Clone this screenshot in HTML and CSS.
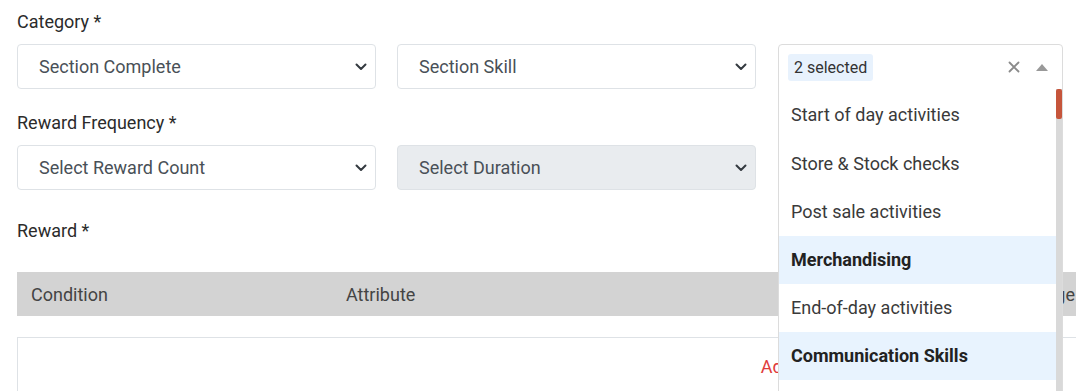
FILE: index.html
```html
<!DOCTYPE html>
<html lang="en">
<head>
    <meta charset="UTF-8">
    <meta name="viewport" content="width=device-width, initial-scale=1.0">
    <title>Reward Rule</title>
    <link rel="stylesheet" href="styles.css">
</head>
<body>
    <div class="form">
        <div class="label">Category *</div>
        <div class="row">
            <div class="select">
                <span>Section Complete</span>
                <svg class="chevron" width="12" height="8" viewBox="0 0 12 8"><path d="M1.5 1.5L6 6l4.5-4.5" fill="none" stroke="#343a40" stroke-width="2" stroke-linecap="round" stroke-linejoin="round"/></svg>
            </div>
            <div class="select">
                <span>Section Skill</span>
                <svg class="chevron" width="12" height="8" viewBox="0 0 12 8"><path d="M1.5 1.5L6 6l4.5-4.5" fill="none" stroke="#343a40" stroke-width="2" stroke-linecap="round" stroke-linejoin="round"/></svg>
            </div>
            <div class="multiselect">
                <div class="ms-head">
                    <span class="chip">2 selected</span>
                    <svg class="ms-clear" width="12" height="12" viewBox="0 0 12 12"><path d="M1.5 1.5l9 9M10.5 1.5l-9 9" stroke="#8a8a8a" stroke-width="1.8" stroke-linecap="round"/></svg>
                    <svg class="ms-caret" width="12" height="7" viewBox="0 0 12 7"><path d="M0 7L6 0l6 7z" fill="#999"/></svg>
                </div>
                <div class="ms-panel">
                    <ul class="ms-list">
                        <li>Start of day activities</li>
                        <li>Store &amp; Stock checks</li>
                        <li>Post sale activities</li>
                        <li class="selected">Merchandising</li>
                        <li>End-of-day activities</li>
                        <li class="selected">Communication Skills</li>
                        <li>Customer Handling</li>
                    </ul>
                    <div class="ms-track"><div class="ms-thumb"></div></div>
                </div>
            </div>
        </div>

        <div class="label">Reward Frequency *</div>
        <div class="row">
            <div class="select">
                <span>Select Reward Count</span>
                <svg class="chevron" width="12" height="8" viewBox="0 0 12 8"><path d="M1.5 1.5L6 6l4.5-4.5" fill="none" stroke="#343a40" stroke-width="2" stroke-linecap="round" stroke-linejoin="round"/></svg>
            </div>
            <div class="select disabled">
                <span>Select Duration</span>
                <svg class="chevron" width="12" height="8" viewBox="0 0 12 8"><path d="M1.5 1.5L6 6l4.5-4.5" fill="none" stroke="#343a40" stroke-width="2" stroke-linecap="round" stroke-linejoin="round"/></svg>
            </div>
        </div>

        <div class="label reward-label">Reward *</div>
        <div class="table">
            <div class="thead">
                <div class="th th-condition">Condition</div>
                <div class="th th-attribute">Attribute</div>
                <div class="th">Percentage</div>
            </div>
            <div class="tbody">
                <span class="add-link">Add Reward</span>
            </div>
        </div>
    </div>
</body>
</html>
```

FILE: styles.css
```css
html, body {
    margin: 0;
    overflow: hidden;
    background: #fff;
}
body {
    font-family: Roboto, "Liberation Sans", sans-serif;
    font-size: 18px;
    color: #212529;
}
.form {
    width: 1584px;
    padding: 10px 0 0 17px;
}
.label {
    line-height: 24px;
    margin-bottom: 10px;
    color: #2b2b2b;
}
.row {
    display: flex;
    gap: 21px;
    margin-bottom: 21px;
}
.select {
    width: 359px;
    height: 45px;
    box-sizing: border-box;
    border: 1px solid #dee2e6;
    border-radius: 4px;
    display: flex;
    align-items: center;
    justify-content: space-between;
    padding: 0 8px 0 21px;
    color: #495057;
    background: #fff;
}
.select.disabled {
    background: #e9ecef;
}
.multiselect {
    width: 285px;
    margin-left: 1px;
    position: relative;
}
.ms-head {
    height: 46px;
    box-sizing: border-box;
    border: 1px solid #dcdcdc;
    border-radius: 4px 4px 0 0;
    display: flex;
    align-items: center;
    padding: 0 14px 0 9px;
}
.chip {
    background: #e8f2fd;
    border-radius: 3px;
    padding: 0 6px;
    line-height: 27px;
    font-size: 16px;
    color: #333;
}
.ms-clear {
    margin-left: auto;
    margin-right: 16px;
}
.ms-panel {
    position: absolute;
    top: 45px;
    left: 0;
    width: 285px;
    box-sizing: border-box;
    border: 1px solid #dcdcdc;
    border-top: none;
    background: #fff;
    display: flex;
    padding-top: 2px;
    z-index: 2;
}
.ms-list {
    list-style: none;
    margin: 0;
    padding: 0;
    flex: 1;
}
.ms-list li {
    height: 48px;
    line-height: 48px;
    padding-left: 12px;
    color: #3a3a3a;
}
.ms-list li:first-child {
    height: 49px;
    line-height: 47px;
}
.ms-list li.selected {
    background: #e8f3fe;
    font-weight: bold;
    color: #222;
}
.ms-track {
    width: 6px;
    margin-top: -2px;
    background: #d9d9d9;
}
.ms-thumb {
    height: 30px;
    background: #c6553b;
    border-radius: 2px;
}
.reward-label {
    margin-top: 29px;
    margin-bottom: 29px;
}
.table {
    width: 1584px;
}
.thead {
    display: flex;
    height: 44px;
    align-items: center;
    background: #d3d3d3;
    color: #444;
}
.th {
    padding-left: 14px;
    box-sizing: border-box;
}
.th-condition {
    width: 315px;
}
.th-attribute {
    width: 638px;
}
.tbody {
    margin-top: 21px;
    border: 1px solid #dee2e6;
    height: 80px;
    display: flex;
    justify-content: center;
    padding-top: 18px;
    box-sizing: border-box;
}
.add-link {
    color: #e03c3c;
}
```
